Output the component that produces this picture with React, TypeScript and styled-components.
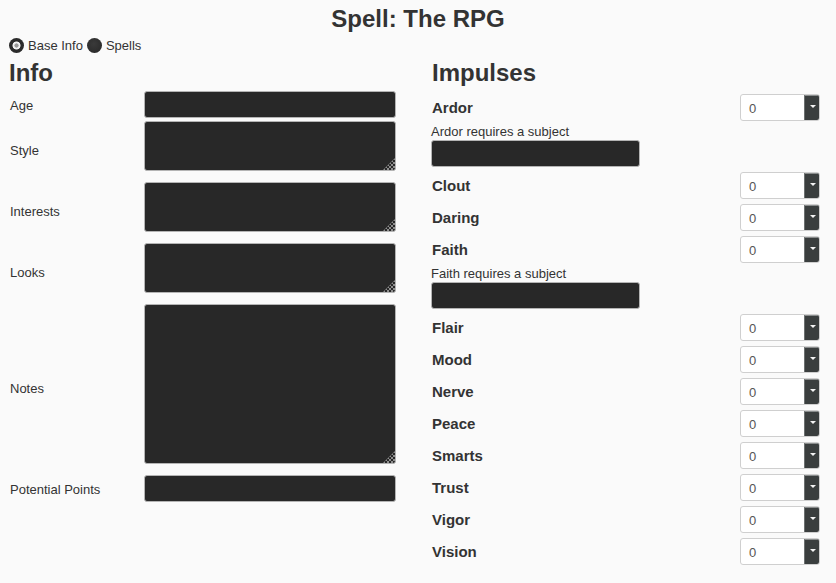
import React from 'react';
import styled, { createGlobalStyle } from 'styled-components';

const Global = createGlobalStyle`
  html, body { margin: 0; padding: 0; background: #fafafa; }
  body { font-family: "Liberation Sans", Arial, sans-serif; color: #333; }
`;

const Page = styled.div`
  width: 836px;
  box-sizing: border-box;
  padding: 5px 8px 0;
`;

const Title = styled.h1`
  margin: 0;
  text-align: center;
  font-size: 24px;
  line-height: 28px;
  font-weight: bold;
  color: #333;
`;

const RadioRow = styled.div`
  display: flex;
  align-items: center;
  gap: 4px;
  margin-top: 3px;
  height: 18px;
  padding-left: 1px;
  font-size: 13px;
`;

const RadioOption = styled.label`
  display: flex;
  align-items: center;
  gap: 4px;
  color: #333;
`;

const RadioDot = styled.span<{ $checked?: boolean }>`
  width: 15px;
  height: 15px;
  border-radius: 50%;
  background: ${(p) =>
    p.$checked
      ? 'radial-gradient(circle, #9a9a9a 0 1.8px, #f2f2f2 2.4px 3.6px, #2b2b2b 4.4px)'
      : 'radial-gradient(circle at 45% 40%, #3a3a3a, #262626)'};
`;

const Columns = styled.div`
  display: grid;
  grid-template-columns: 423px 389px;
  margin-top: 5px;
`;

const Heading = styled.h2`
  margin: 0;
  padding-left: 1px;
  font-size: 24px;
  line-height: 28px;
  font-weight: bold;
  color: #333;
`;

const InfoGrid = styled.div`
  display: grid;
  grid-template-columns: 136px 252px;
  row-gap: 3px;
  margin-top: 4px;
  align-items: center;
`;

const FieldLabel = styled.label`
  padding-left: 2px;
  padding-top: 1px;
  font-size: 13px;
  color: #333;
`;

const DarkInput = styled.input<{ $width?: number }>`
  display: block;
  box-sizing: border-box;
  width: ${(p) => (p.$width ? `${p.$width}px` : '100%')};
  height: 27px;
  margin: 0;
  background: #282828;
  border: 1px solid #b4b4b4;
  border-radius: 3px;
  color: #ddd;
  outline: none;
`;

const AreaWrap = styled.div`
  position: relative;
  margin-bottom: 8px;
  &::after {
    content: '';
    position: absolute;
    right: 1px;
    bottom: 1px;
    width: 12px;
    height: 12px;
    background: repeating-conic-gradient(#8e8e8e 0 25%, transparent 0 50%) 0 0 / 4px 4px;
    clip-path: polygon(100% 0, 100% 100%, 0 100%);
  }
`;

const DarkArea = styled.textarea<{ $h: number }>`
  display: block;
  box-sizing: border-box;
  width: 100%;
  height: ${(p) => p.$h}px;
  margin: 0;
  background: #282828;
  border: 1px solid #b4b4b4;
  border-radius: 3px;
  resize: none;
  outline: none;
`;

const ImpulseList = styled.div`
  display: flex;
  flex-direction: column;
  gap: 5px;
  margin-top: 7px;
`;

const ImpulseRow = styled.div`
  display: flex;
  justify-content: space-between;
  align-items: center;
  height: 27px;
`;

const ImpulseName = styled.span`
  padding-left: 1px;
  font-size: 15px;
  font-weight: bold;
  color: #333;
`;

const SubjectBlock = styled.div`
  display: flex;
  flex-direction: column;
  margin-top: -2px;
`;

const SubjectNote = styled.span`
  font-size: 13px;
  line-height: 16px;
  color: #333;
`;

const SelectBox = styled.div`
  display: flex;
  width: 80px;
  height: 27px;
  box-sizing: border-box;
  border: 1px solid #cfcfcf;
  border-radius: 3px;
  background: #fff;
  overflow: hidden;
`;

const SelectValue = styled.span`
  flex: 1;
  padding-left: 8px;
  font-size: 13px;
  line-height: 27px;
  color: #555;
`;

const SelectButton = styled.span`
  width: 16px;
  margin: -1px -1px -1px 0;
  display: flex;
  justify-content: center;
  padding-top: 9px;
  box-sizing: border-box;
  background: #3a3e3e;
  border-top: 2px solid #8a8d8d;
  border-left: 1px solid #6c7070;
  &::before {
    content: '';
    width: 0;
    height: 0;
    border-left: 3px solid transparent;
    border-right: 3px solid transparent;
    border-top: 3px solid #f4f4f4;
  }
`;

const Select = () => (
  <SelectBox>
    <SelectValue>0</SelectValue>
    <SelectButton />
  </SelectBox>
);

const infoFields: { label: string; kind: 'input' | 'area'; h?: number }[] = [
  { label: 'Age', kind: 'input' },
  { label: 'Style', kind: 'area', h: 50 },
  { label: 'Interests', kind: 'area', h: 50 },
  { label: 'Looks', kind: 'area', h: 50 },
  { label: 'Notes', kind: 'area', h: 160 },
  { label: 'Potential Points', kind: 'input' },
];

const impulses: { name: string; subject?: boolean }[] = [
  { name: 'Ardor', subject: true },
  { name: 'Clout' },
  { name: 'Daring' },
  { name: 'Faith', subject: true },
  { name: 'Flair' },
  { name: 'Mood' },
  { name: 'Nerve' },
  { name: 'Peace' },
  { name: 'Smarts' },
  { name: 'Trust' },
  { name: 'Vigor' },
  { name: 'Vision' },
];

export default function App() {
  return (
    <Page>
      <Global />
      <Title>Spell: The RPG</Title>
      <RadioRow>
        <RadioOption>
          <RadioDot $checked />
          Base Info
        </RadioOption>
        <RadioOption>
          <RadioDot />
          Spells
        </RadioOption>
      </RadioRow>
      <Columns>
        <div>
          <Heading>Info</Heading>
          <InfoGrid>
            {infoFields.map((f) => (
              <React.Fragment key={f.label}>
                <FieldLabel>{f.label}</FieldLabel>
                {f.kind === 'input' ? (
                  <DarkInput />
                ) : (
                  <AreaWrap>
                    <DarkArea $h={f.h!} />
                  </AreaWrap>
                )}
              </React.Fragment>
            ))}
          </InfoGrid>
        </div>
        <div>
          <Heading>Impulses</Heading>
          <ImpulseList>
            {impulses.map((imp) => (
              <React.Fragment key={imp.name}>
                <ImpulseRow>
                  <ImpulseName>{imp.name}</ImpulseName>
                  <Select />
                </ImpulseRow>
                {imp.subject && (
                  <SubjectBlock>
                    <SubjectNote>{imp.name} requires a subject</SubjectNote>
                    <DarkInput $width={209} />
                  </SubjectBlock>
                )}
              </React.Fragment>
            ))}
          </ImpulseList>
        </div>
      </Columns>
    </Page>
  );
}
